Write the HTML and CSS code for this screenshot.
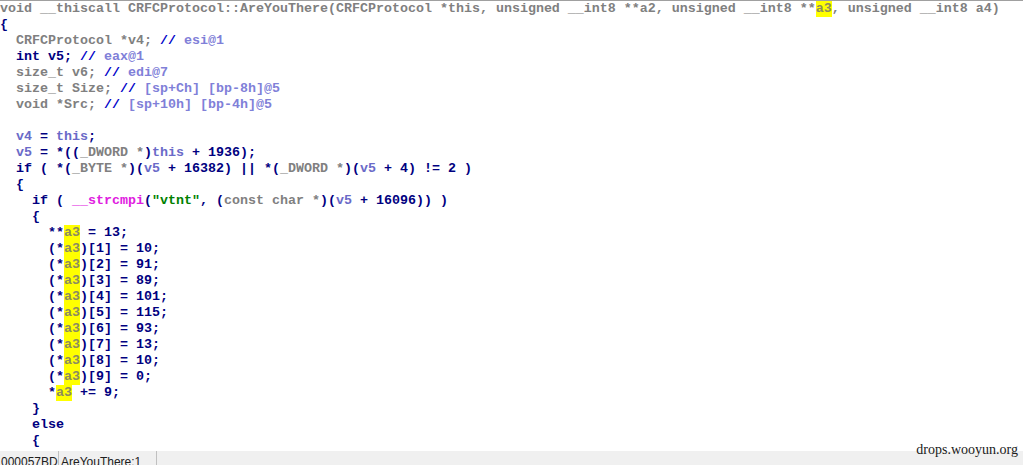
FILE: index.html
```html
<!DOCTYPE html>
<html>
<head>
<meta charset="utf-8">
<link rel="stylesheet" href="styles.css">
</head>
<body>
<div class="view">
<pre class="code"><span class="t">void __thiscall CRFCProtocol::AreYouThere(CRFCProtocol *this, unsigned __int8 **a2, unsigned __int8 **</span><span class="h">a3</span><span class="t">, unsigned __int8 a4)</span>
{
  <span class="t">CRFCProtocol *v4;</span> <span class="cm">//</span> <span class="c">esi@1</span>
  int v5; <span class="cm">//</span> <span class="c">eax@1</span>
  <span class="t">size_t v6;</span> <span class="cm">//</span> <span class="c">edi@7</span>
  <span class="t">size_t Size;</span> <span class="cm">//</span> <span class="c">[sp+Ch] [bp-8h]@5</span>
  <span class="t">void *Src;</span> <span class="cm">//</span> <span class="c">[sp+10h] [bp-4h]@5</span>

  <span class="v">v4</span> = <span class="v">this</span>;
  <span class="v">v5</span> = *((<span class="t">_DWORD *</span>)<span class="v">this</span> + 1936);
  if ( *(<span class="t">_BYTE *</span>)(<span class="v">v5</span> + 16382) || *(<span class="t">_DWORD *</span>)(<span class="v">v5</span> + 4) != 2 )
  {
    if ( <span class="f">__strcmpi</span>(<span class="s">"vtnt"</span>, (<span class="t">const char *</span>)(<span class="v">v5</span> + 16096)) )
    {
      **<span class="h">a3</span> = 13;
      (*<span class="h">a3</span>)[1] = 10;
      (*<span class="h">a3</span>)[2] = 91;
      (*<span class="h">a3</span>)[3] = 89;
      (*<span class="h">a3</span>)[4] = 101;
      (*<span class="h">a3</span>)[5] = 115;
      (*<span class="h">a3</span>)[6] = 93;
      (*<span class="h">a3</span>)[7] = 13;
      (*<span class="h">a3</span>)[8] = 10;
      (*<span class="h">a3</span>)[9] = 0;
      *<span class="h">a3</span> += 9;
    }
    else
    {
</pre>
</div>
<div class="status">
  <span class="cell addr">000057BD</span><span class="cell fn">AreYouThere:1</span>
</div>
<div class="watermark">drops.wooyun.org</div>
</body>
</html>
```
FILE: styles.css
```css
html, body {
  margin: 0;
  padding: 0;
  background: #ffffff;
  width: 1023px;
  height: 465px;
  overflow: hidden;
  position: relative;
}

.view {
  border-top: 1px solid #a0a0a0;
  height: 450px;
  overflow: hidden;
}

.code {
  margin: 0;
  font-family: "Liberation Mono", "DejaVu Sans Mono", monospace;
  font-weight: bold;
  font-size: 13.333px;
  line-height: 16px;
  color: #000080;
  white-space: pre;
}

.t { color: #808080; }
.v { color: #6a6ac8; }
.c { color: #8080d8; }
.cm { color: #0000c8; }
.f { color: #e020e0; }
.s { color: #008000; }
.h {
  background: #ffff00;
  color: #8c8c60;
  display: inline-block;
  line-height: 16px;
  height: 16px;
  vertical-align: top;
}

.status {
  display: flex;
  height: 15px;
  background: #f0f0f0;
  font-family: "Liberation Sans", Arial, sans-serif;
  font-size: 12px;
  line-height: 15px;
  color: #202020;
}

.cell {
  padding: 0 3px 0 1px;
  border-right: 1px solid #c0c0c0;
  padding-top: 4px;
}

.addr { width: 54px; }
.fn { width: 92px; padding-left: 2px; }

.watermark {
  position: absolute;
  right: 5px;
  bottom: 7px;
  font-family: "Liberation Serif", "Times New Roman", serif;
  font-size: 14px;
  color: #202020;
}
```
